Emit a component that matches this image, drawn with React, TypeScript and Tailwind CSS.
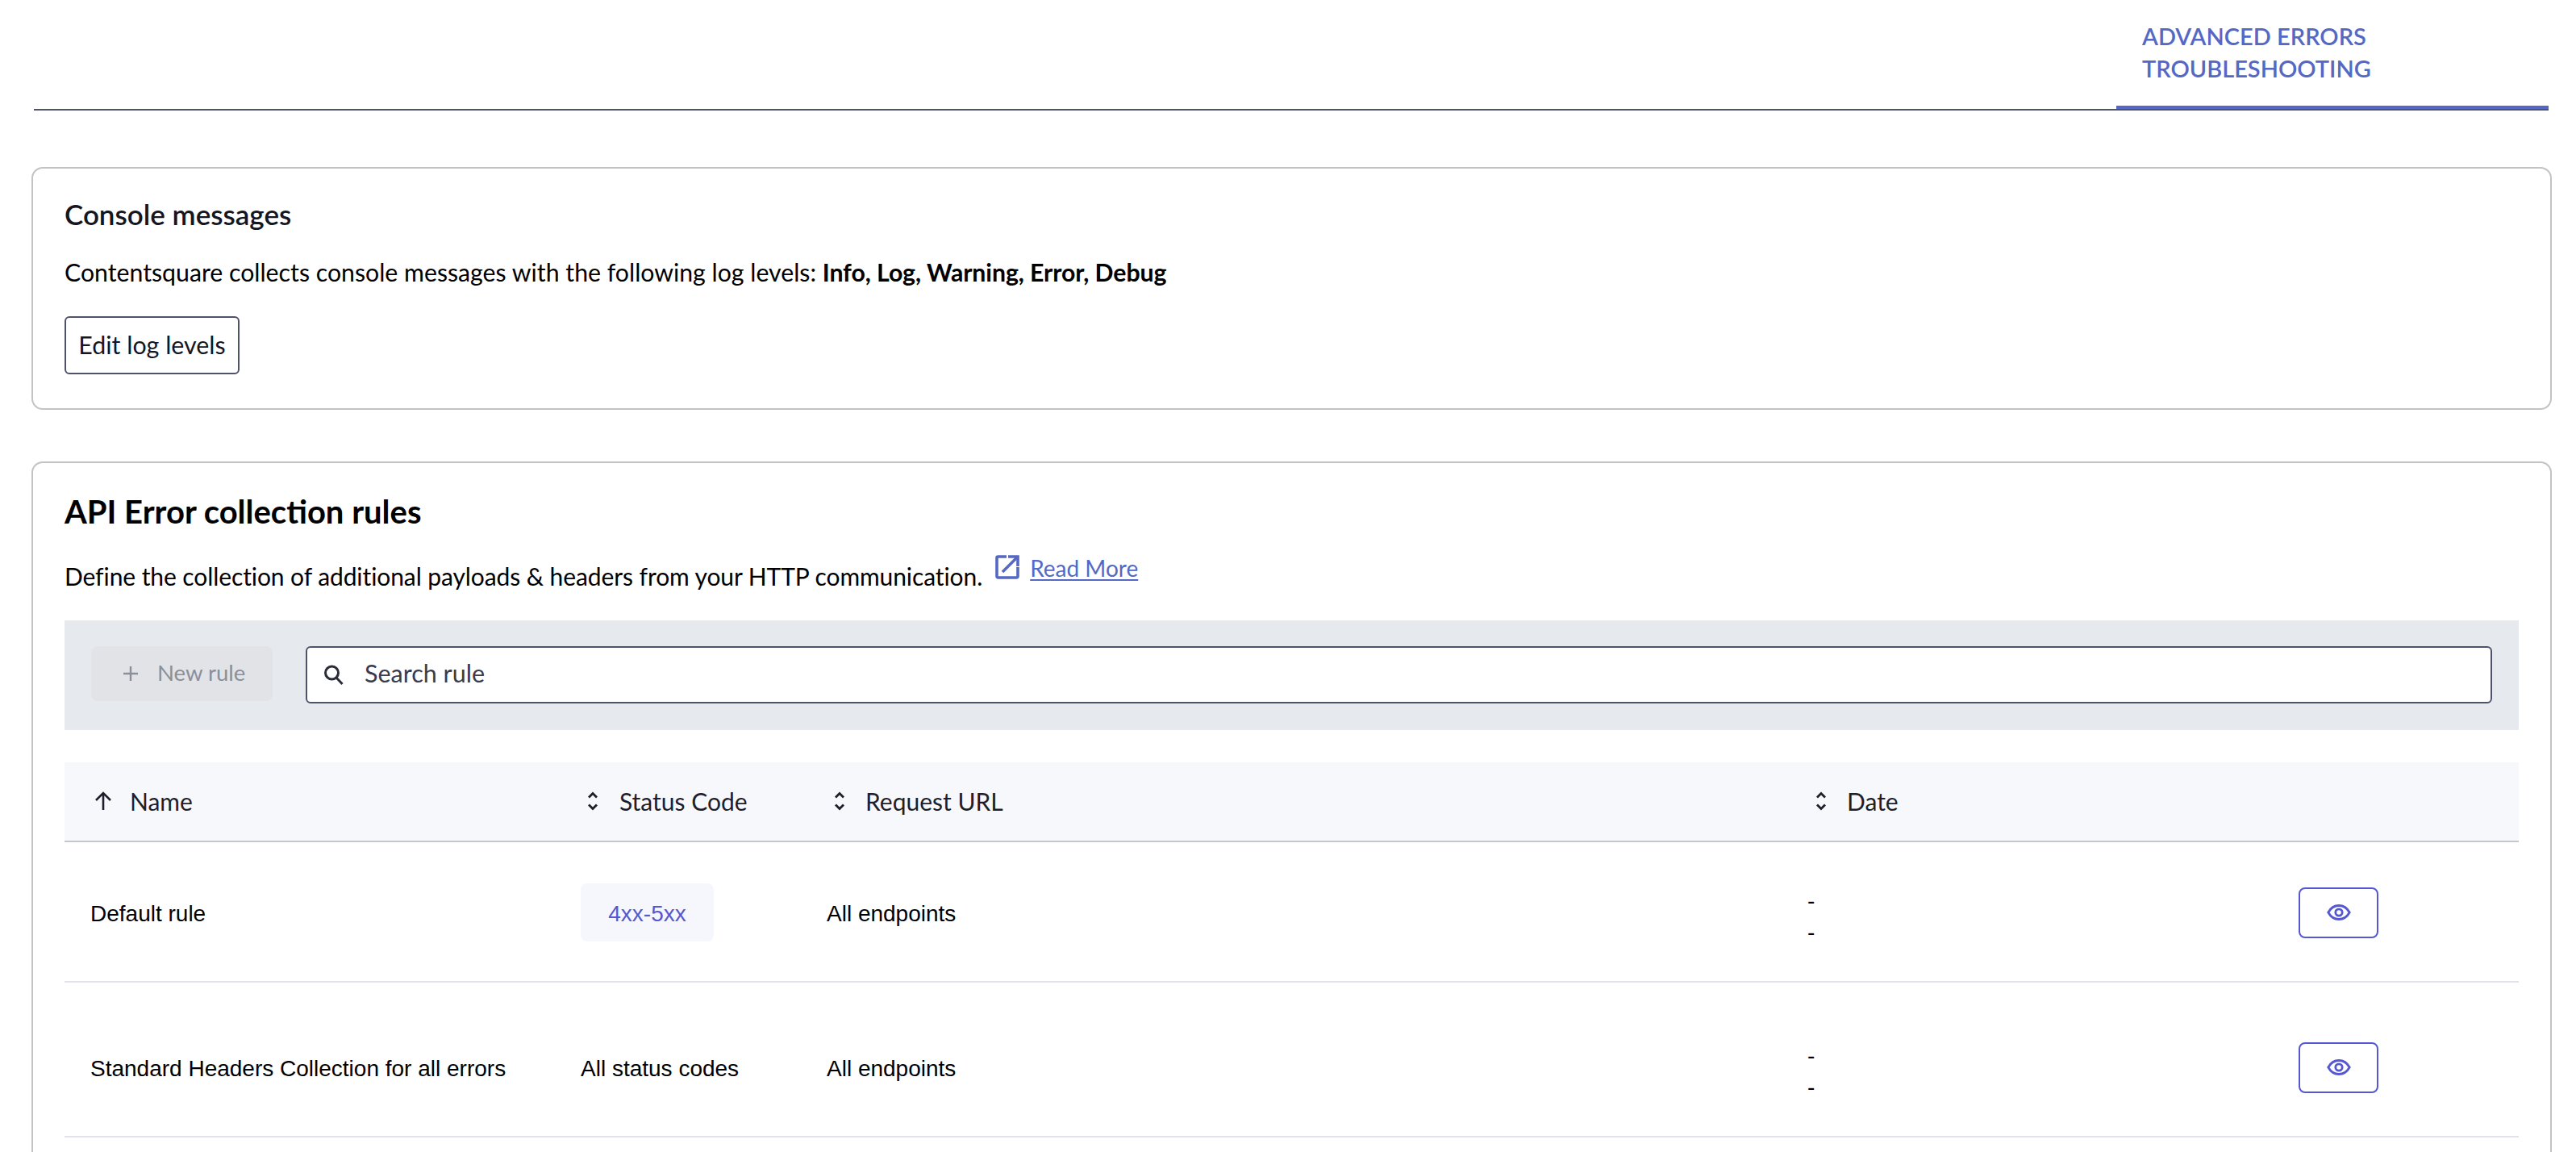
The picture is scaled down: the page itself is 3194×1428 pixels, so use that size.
const rows = [
  { name: "Default rule", status: "4xx-5xx", url: "All endpoints", rowClass: "h-[174px] pt-[3px]" },
  { name: "Standard Headers Collection for all errors", status: "All status codes", url: "All endpoints", rowClass: "h-[192px] pt-[21px]" },
]

function SortIcon() {
  return (
    <svg width="16" height="28" viewBox="0 0 16 28" fill="none" stroke="#1e1f2b" strokeWidth="2.8" className="shrink-0">
      <path d="M3 9.500 8 4.500 13 9.500" />
      <path d="M3 18.500 8 23.500 13 18.500" />
    </svg>
  )
}

function EyeIcon() {
  return (
    <svg width="30" height="22" viewBox="0 0 30 22" fill="none" stroke="#5558d0" strokeWidth="2.8">
      <path d="M1.800 11C4.800 5.600 9.500 2.500 15 2.500S25.200 5.600 28.200 11C25.200 16.400 20.500 19.500 15 19.500S4.800 16.400 1.800 11Z" />
      <circle cx="15" cy="11" r="4.200" />
    </svg>
  )
}

function Row({ name, status, url, rowClass, index }: { name: string; status: string; url: string; rowClass: string; index: number }) {
  return (
    <div className={`grid grid-cols-[640px_305px_1216px_609px_1fr] items-center border-b-2 border-[#e1e3e8] font-['Liberation_Sans',Arial,sans-serif] text-[28px] text-black ${rowClass}`}>
      <div className="pl-[32px] pt-[4px]">{name}</div>
      <div>
        {index === 0 ? (
          <span className="flex h-[72px] w-[165px] items-center justify-center rounded-[8px] bg-[#f6f7fd] pt-[3px] text-[#5558d0]">{status}</span>
        ) : (
          <span className="block pt-[4px]">{status}</span>
        )}
      </div>
      <div className="pt-[4px]">{url}</div>
      <div className="mt-[10px] flex flex-col gap-[7px] leading-[32px]">
        <span>-</span>
        <span>-</span>
      </div>
      <div>
        <button className="flex h-[63px] w-[99px] items-center justify-center rounded-[8px] border-2 border-[#5558d0] bg-white">
          <EyeIcon />
        </button>
      </div>
    </div>
  )
}

export default function App() {
  return (
    <div className="h-[1428px] overflow-hidden bg-white font-['Lato',sans-serif] text-[#15161f]">
      <div className="ml-[42px] flex h-[137px] w-[3118px] justify-end border-b-2 border-[#50516a]">
        <div className="h-[135px] w-[536px] border-b-4 border-[#5468c4] pl-[32px] pt-[25px] text-[29px] font-semibold leading-[40px] text-[#5468c4]">
          ADVANCED ERRORS
          <br />
          TROUBLESHOOTING
        </div>
      </div>

      <section className="ml-[38.5px] mt-[69.5px] h-[301px] w-[3125px] rounded-[14px] border-[2.5px] border-[#c2c3c5] pl-[39.5px] pt-[36px]">
        <h2 className="text-[35px] font-semibold leading-[40px]">Console messages</h2>
        <p className="mt-[32px] text-[30.25px] leading-[40px] text-black">
          Contentsquare collects console messages with the following log levels:{" "}
          <b className="tracking-[-0.08px]">Info, Log, Warning, Error, Debug</b>
        </p>
        <button className="mt-[35px] flex h-[72px] w-[217px] items-center justify-center rounded-[6px] border-2 border-[#50516a] text-[30.4px]">
          Edit log levels
        </button>
      </section>

      <section className="ml-[38.5px] mt-[64px] h-[900px] w-[3125px] rounded-t-[14px] border-[2.5px] border-b-0 border-[#c2c3c5] pl-[39.5px] pr-[39px] pt-[36px]">
        <h2 className="text-[40px] font-bold leading-[48px] text-black">API Error collection rules</h2>
        <div className="mt-[17px] flex h-[62px] items-start text-[30px] text-black">
          <p className="mt-[19px] leading-[40px] tracking-[-0.09px]">Define the collection of additional payloads &amp; headers from your HTTP communication.</p>
          <a className="ml-[16px] mt-[11px] flex items-start gap-[13px] text-[28px] leading-[36px] text-[#5468c4]">
            <svg width="30" height="30" viewBox="0 0 30 30" fill="none" stroke="#5468c4" strokeWidth="3.6" className="mt-[2px] shrink-0">
              <path d="M14 2H3.500A1.500 1.500 0 0 0 2 3.500V26.500A1.500 1.500 0 0 0 3.500 28H26.500A1.500 1.500 0 0 0 28 26.500V15" />
              <path d="M16 2H28V14" />
              <path d="M28 2 9 21" />
            </svg>
            <span className="underline decoration-2 underline-offset-[3px]">Read More</span>
          </a>
        </div>

        <div className="mt-[32px] flex h-[136px] items-center gap-[41px] bg-[#e6e9ed] pl-[33px] pr-[33px]">
          <button className="flex h-[68px] w-[225px] shrink-0 -translate-y-[2px] items-center gap-[23px] rounded-[8px] bg-[#e1e3e7] pl-[39px] text-[27.5px] text-[#8b8f9a]">
            <svg width="20" height="20" viewBox="0 0 20 20" stroke="#8b8f9a" strokeWidth="2.4" className="shrink-0">
              <path d="M10 1V19M1 10H19" />
            </svg>
            <span className="pb-[2px]">New rule</span>
          </button>
          <div className="flex h-[71px] flex-1 items-center rounded-[6px] border-2 border-[#50516a] bg-white pl-[21px] text-[30.5px] text-[#3a3b4d]">
            <svg width="26" height="30" viewBox="0 0 26 30" fill="none" stroke="#2b2c3a" strokeWidth="3" className="shrink-0">
              <circle cx="9.500" cy="12" r="8" />
              <path d="M15.500 18.500 22.500 26" />
            </svg>
            <span className="ml-[24px] pb-[3px]">Search rule</span>
          </div>
        </div>

        <div className="mt-[40px] grid h-[99px] grid-cols-[640px_305px_1216px_1fr] items-center border-b-2 border-[#c4c6cc] bg-[#f6f8fc] text-[30px] text-[#1e1f2b]">
          <div className="flex items-center gap-[22px] pl-[37px]">
            <svg width="22" height="24" viewBox="0 0 22 24" fill="none" stroke="#1e1f2b" strokeWidth="2.6" className="shrink-0">
              <path d="M11 23V2M2 11 11 2 20 11" />
            </svg>
            Name
          </div>
          <div className="flex items-center gap-[25px] pl-[7px]">
            <SortIcon />
            Status Code
          </div>
          <div className="flex items-center gap-[24px] pl-[8px]">
            <SortIcon />
            Request URL
          </div>
          <div className="flex items-center gap-[24px] pl-[9px]">
            <SortIcon />
            Date
          </div>
        </div>

        {rows.map((row, i) => (
          <Row key={row.name} {...row} index={i} />
        ))}
      </section>
    </div>
  )
}
